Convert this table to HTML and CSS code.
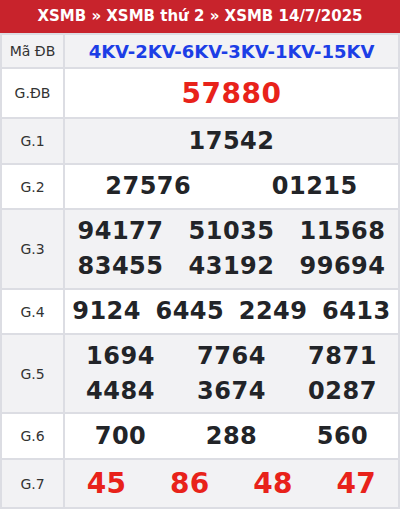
FILE: index.html
```html
<!DOCTYPE html>
<html lang="vi">
<head>
<meta charset="utf-8">
<title>XSMB 14/7/2025</title>
<link rel="stylesheet" href="styles.css">
</head>
<body>
<div class="board">
  <div class="title">XSMB » XSMB thứ 2 » XSMB 14/7/2025</div>
  <table class="results">
    <tr class="r-code alt">
      <th>Mã ĐB</th>
      <td class="code">4KV-2KV-6KV-3KV-1KV-15KV</td>
    </tr>
    <tr class="r-db">
      <th>G.ĐB</th>
      <td><div class="nums c1 big red"><span>57880</span></div></td>
    </tr>
    <tr class="r-1 alt">
      <th>G.1</th>
      <td><div class="nums c1"><span>17542</span></div></td>
    </tr>
    <tr class="r-2">
      <th>G.2</th>
      <td><div class="nums c2"><span>27576</span><span>01215</span></div></td>
    </tr>
    <tr class="r-3 alt">
      <th>G.3</th>
      <td><div class="nums c3"><span>94177</span><span>51035</span><span>11568</span><span>83455</span><span>43192</span><span>99694</span></div></td>
    </tr>
    <tr class="r-4">
      <th>G.4</th>
      <td><div class="nums c4"><span>9124</span><span>6445</span><span>2249</span><span>6413</span></div></td>
    </tr>
    <tr class="r-5 alt">
      <th>G.5</th>
      <td><div class="nums c3"><span>1694</span><span>7764</span><span>7871</span><span>4484</span><span>3674</span><span>0287</span></div></td>
    </tr>
    <tr class="r-6">
      <th>G.6</th>
      <td><div class="nums c3"><span>700</span><span>288</span><span>560</span></div></td>
    </tr>
    <tr class="r-7 alt">
      <th>G.7</th>
      <td><div class="nums c4 big red"><span>45</span><span>86</span><span>48</span><span>47</span></div></td>
    </tr>
  </table>
</div>
</body>
</html>
```

FILE: styles.css
```css
* { box-sizing: border-box; }
html, body { margin: 0; padding: 0; background: #ffffff; }
body { font-family: "DejaVu Sans", Verdana, sans-serif; }

.board { width: 400px; }

.title {
  height: 33px;
  background: #c8232c;
  color: #ffffff;
  font-weight: bold;
  font-size: 15px;
  line-height: 33px;
  text-align: center;
}

.results {
  width: 400px;
  border-collapse: collapse;
  border: 2px solid #dcdde3;
}
.results th, .results td {
  border: 2px solid #dcdde3;
  padding: 0;
  vertical-align: middle;
}
.results th {
  width: 63px;
  font-weight: normal;
  font-size: 14px;
  color: #333333;
  text-align: center;
}
.results tr { background: #ffffff; }
.results tr.alt { background: #f2f2f4; }

.r-code { height: 34px; }
.r-db { height: 50px; }
.r-1 { height: 46px; }
.r-2 { height: 45px; }
.r-3 { height: 80px; }
.r-4 { height: 45px; }
.r-5 { height: 79px; }
.r-6 { height: 46px; }
.r-7 { height: 49px; }

.code {
  color: #1c3ee6;
  font-weight: bold;
  font-size: 18px;
  text-align: center;
}

.nums {
  display: grid;
  text-align: center;
  font-weight: bold;
  font-size: 24px;
  line-height: 35px;
  color: #222428;
  letter-spacing: 0.5px;
}
.nums.c1 { grid-template-columns: 1fr; }
.nums.c2 { grid-template-columns: repeat(2, 1fr); }
.nums.c3 { grid-template-columns: repeat(3, 1fr); }
.nums.c4 { grid-template-columns: repeat(4, 1fr); }
.nums.big { font-size: 28px; }
.nums.red { color: #e8221a; }
```
